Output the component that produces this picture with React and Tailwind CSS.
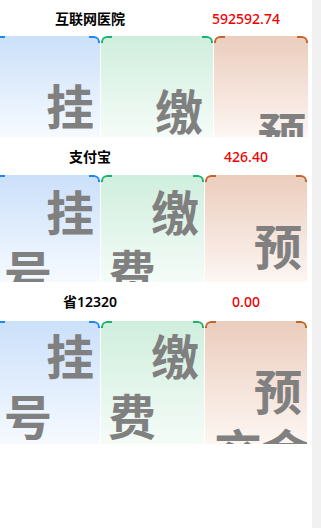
const ROWS = [
  {
    label: "互联网医院",
    amount: "592592.74",
    head: "h-[36px]",
    height: "h-[101px]",
    cards: [
      { tone: "blue", w: "w-[106px]", top: "pt-[41px]", first: "pl-[52px]", second: "pl-[10px]" },
      { tone: "green", w: "w-[112px]", top: "pt-[46px]", first: "pl-[54px]", second: "pl-[7px]" },
      { tone: "orange", w: "w-[94px]", top: "pt-[69px]", first: "pl-[44px]", second: "pl-[3px]" },
    ],
  },
  {
    label: "支付宝",
    amount: "426.40",
    head: "h-[38px]",
    height: "h-[107px]",
    cards: [
      { tone: "blue", w: "w-[106px]", top: "pt-[8px]", first: "pl-[52px]", second: "pl-[10px]" },
      { tone: "green", w: "w-[103px]", top: "pt-[8px]", first: "pl-[50px]", second: "pl-[7px]" },
      { tone: "orange", w: "w-[102px]", top: "pt-[42px]", first: "pl-[49px]", second: "pl-[9px]" },
    ],
  },
  {
    label: "省12320",
    amount: "0.00",
    head: "h-[39px]",
    height: "h-[123px]",
    cards: [
      { tone: "blue", w: "w-[106px]", top: "pt-[6px]", first: "pl-[52px]", second: "pl-[10px]" },
      { tone: "green", w: "w-[103px]", top: "pt-[6px]", first: "pl-[50px]", second: "pl-[7px]" },
      { tone: "orange", w: "w-[102px]", top: "pt-[41px]", first: "pl-[49px]", second: "pl-[9px]" },
    ],
  },
];

const TONES = {
  blue: {
    bg: "bg-linear-to-b from-[#cbe0fa] to-[#f6faff]",
    line: "border-[#1f87f0]",
    words: ["挂", "号"],
  },
  green: {
    bg: "bg-linear-to-b from-[#cfeedd] to-[#f5fcf8]",
    line: "border-[#17b36f]",
    words: ["缴", "费"],
  },
  orange: {
    bg: "bg-linear-to-b from-[#ebcdbd] to-[#fdf6f2]",
    line: "border-[#c4662c]",
    words: ["预", "交金"],
  },
};

function Card({ card, height, first }) {
  const t = TONES[card.tone];
  return (
    <div
      className={`relative shrink-0 overflow-hidden rounded-t-[6px] ${t.bg} ${card.w} ${height} ${card.top} ${first ? "-ml-[6px]" : ""}`}
    >
      <span className={`absolute left-0 top-0 h-[7px] w-[11px] rounded-tl-[6px] border-l-2 border-t-2 ${t.line}`} />
      <span className={`absolute right-0 top-0 h-[7px] w-[11px] rounded-tr-[6px] border-r-2 border-t-2 ${t.line}`} />
      <div className="whitespace-nowrap text-[48px] font-bold leading-[60px] text-[#808080]">
        <div className={card.first}>{t.words[0]}</div>
        <div className={card.second}>{t.words[1]}</div>
      </div>
    </div>
  );
}

export default function App() {
  return (
    <div
      className="flex h-[528px] w-[321px] overflow-hidden bg-white"
      style={{ fontFamily: '"Noto Sans", "Noto Sans CJK SC", sans-serif' }}
    >
      <main className="w-[312px] shrink-0 overflow-hidden">
        {ROWS.map((row) => (
          <section key={row.label}>
            <div className={`flex items-center text-[14px] ${row.head}`}>
              <span className="w-[180px] text-center font-semibold text-black">{row.label}</span>
              <span className="w-[132px] text-center font-medium text-[#ee0000]">{row.amount}</span>
            </div>
            <div className="flex gap-[1px]">
              {row.cards.map((card, i) => (
                <Card key={card.tone} card={card} height={row.height} first={i === 0} />
              ))}
            </div>
          </section>
        ))}
      </main>
      <div className="h-full w-[9px] bg-[#f1f1f1]" />
    </div>
  );
}
